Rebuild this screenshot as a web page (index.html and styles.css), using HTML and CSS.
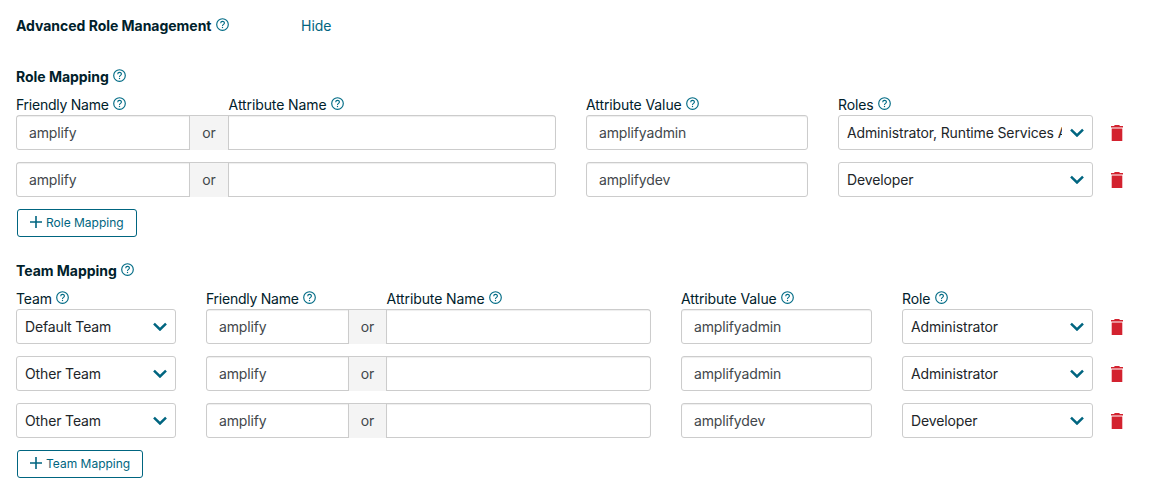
FILE: index.html
```html
<!DOCTYPE html>
<html lang="en">
<head>
<meta charset="utf-8">
<title>Advanced Role Management</title>
<link rel="stylesheet" href="styles.css">
</head>
<body>
<svg class="sprite" aria-hidden="true">
  <symbol id="help" viewBox="0 0 13 13"><circle cx="6.5" cy="6.5" r="5.8" fill="none" stroke="currentColor" stroke-width="1.15"/><path d="M4.7 5.2C4.7 2.7 8.4 2.8 8.4 5C8.4 6.4 6.5 6.4 6.5 7.9" fill="none" stroke="currentColor" stroke-width="1.1"/><path d="M5.9 8.9h1.2v1.2H5.9z" fill="currentColor"/></symbol>
  <symbol id="chevron" viewBox="0 0 14 9"><path d="M1 1.7L7 7.5L13 1.7" fill="none" stroke="currentColor" stroke-width="2.5"/></symbol>
  <symbol id="trash" viewBox="0 0 12 16"><path d="M0 .9H3L3.8 .1H8.2L9 .9H12V2.6H0zM.7 3.6H11.3V16H.7z" fill="currentColor"/></symbol>
  <symbol id="plus" viewBox="0 0 12 12"><path d="M6 0V12M0 6H12" fill="none" stroke="currentColor" stroke-width="1.6"/></symbol>
</svg>
<main class="panel">
  <header class="panel-header">
    <h1 class="title">Advanced Role Management<svg class="help"><use href="#help"/></svg></h1>
    <a class="toggle">Hide</a>
  </header>

  <section class="section role-section">
    <h2 class="title">Role Mapping<svg class="help"><use href="#help"/></svg></h2>
    <div class="row labels">
      <div class="pair"><span class="first">Friendly Name<svg class="help"><use href="#help"/></svg></span><span class="second">Attribute Name<svg class="help"><use href="#help"/></svg></span></div>
      <span>Attribute Value<svg class="help"><use href="#help"/></svg></span>
      <span>Roles<svg class="help"><use href="#help"/></svg></span>
    </div>
    <div class="rows">
      <div class="row">
        <div class="pair field"><span class="input">amplify</span><span class="or">or</span><span class="input"></span></div>
        <div class="field input">amplifyadmin</div>
        <div class="field select"><span class="value">Administrator, Runtime Services Admin</span><svg class="chevron"><use href="#chevron"/></svg></div>
        <svg class="trash"><use href="#trash"/></svg>
      </div>
      <div class="row">
        <div class="pair field"><span class="input">amplify</span><span class="or">or</span><span class="input"></span></div>
        <div class="field input">amplifydev</div>
        <div class="field select"><span class="value">Developer</span><svg class="chevron"><use href="#chevron"/></svg></div>
        <svg class="trash"><use href="#trash"/></svg>
      </div>
    </div>
    <button class="add"><svg class="plus"><use href="#plus"/></svg>Role Mapping</button>
  </section>

  <section class="section team-section">
    <h2 class="title">Team Mapping<svg class="help"><use href="#help"/></svg></h2>
    <div class="row labels">
      <span>Team<svg class="help"><use href="#help"/></svg></span>
      <div class="pair"><span class="first">Friendly Name<svg class="help"><use href="#help"/></svg></span><span class="second">Attribute Name<svg class="help"><use href="#help"/></svg></span></div>
      <span>Attribute Value<svg class="help"><use href="#help"/></svg></span>
      <span>Role<svg class="help"><use href="#help"/></svg></span>
    </div>
    <div class="rows">
      <div class="row">
        <div class="field select"><span class="value">Default Team</span><svg class="chevron"><use href="#chevron"/></svg></div>
        <div class="pair field"><span class="input">amplify</span><span class="or">or</span><span class="input"></span></div>
        <div class="field input">amplifyadmin</div>
        <div class="field select"><span class="value">Administrator</span><svg class="chevron"><use href="#chevron"/></svg></div>
        <svg class="trash"><use href="#trash"/></svg>
      </div>
      <div class="row">
        <div class="field select"><span class="value">Other Team</span><svg class="chevron"><use href="#chevron"/></svg></div>
        <div class="pair field"><span class="input">amplify</span><span class="or">or</span><span class="input"></span></div>
        <div class="field input">amplifyadmin</div>
        <div class="field select"><span class="value">Administrator</span><svg class="chevron"><use href="#chevron"/></svg></div>
        <svg class="trash"><use href="#trash"/></svg>
      </div>
      <div class="row">
        <div class="field select"><span class="value">Other Team</span><svg class="chevron"><use href="#chevron"/></svg></div>
        <div class="pair field"><span class="input">amplify</span><span class="or">or</span><span class="input"></span></div>
        <div class="field input">amplifydev</div>
        <div class="field select"><span class="value">Developer</span><svg class="chevron"><use href="#chevron"/></svg></div>
        <svg class="trash"><use href="#trash"/></svg>
      </div>
    </div>
    <button class="add"><svg class="plus"><use href="#plus"/></svg>Team Mapping</button>
  </section>
</main>
</body>
</html>
```
FILE: styles.css
```css
* { box-sizing: border-box; }
body {
  margin: 0;
  background: #fff;
  color: #00212b;
  font: 14px/20px Inter, "Liberation Sans", sans-serif;
  letter-spacing: -.1px;
}
.sprite { display: none; }
.panel { padding: 16px 16px 0; }
.panel-header { display: grid; grid-template-columns: 285px auto; }
.title { margin: 0; font-size: 14px; font-weight: 700; line-height: 20px; letter-spacing: -.03px; white-space: nowrap; }
.toggle { color: #006580; letter-spacing: 0; }
.help {
  width: 13px;
  height: 13px;
  margin-left: 4.2px;
  vertical-align: 0;
  color: #006b85;
}
.section { margin-top: 24px; }
.role-section { margin-top: 31px; }
.labels { height: 20px; margin-top: 8px; white-space: nowrap; }
.title { height: 20px; }
.rows { display: grid; gap: 12px; }
.row { display: grid; column-gap: 30px; }
.role-section .row { grid-template-columns: 540px 222px 255px 12px; }
.team-section .row { grid-template-columns: 160px 445px 191px 191px 12px; }
.pair { display: grid; }
.role-section .pair { grid-template-columns: 172px 40px 1fr; }
.team-section .pair { grid-template-columns: 141px 39px 1fr; }
.labels .first { margin-left: -.6px; letter-spacing: -.25px; }
.labels .second { grid-column: 3; }
.labels .pair { padding-left: .6px; }
.field {
  height: 35px;
  border: 1px solid #ccc;
  border-radius: 3px;
  background: #fff;
}
.input { padding: 0 12px; line-height: 34px; color: #42474b; letter-spacing: -.14px; }
.field.input, .pair .input { box-shadow: inset 0 1px 1px rgba(0, 0, 0, .07); }
.or {
  border: solid #ccc;
  border-width: 0 1px;
  background: #f4f4f4;
  color: #42474b;
  line-height: 34px;
  text-align: center;
}
.select { display: flex; align-items: center; padding: 0 8px; color: #212529; letter-spacing: -.14px; }
.value {
  flex: 1;
  margin-right: 8px;
  overflow: hidden;
  line-height: 33px;
  white-space: nowrap;
}
.chevron { width: 14px; height: 9px; color: #006580; }
.trash { align-self: center; width: 12px; height: 16px; margin-left: -12px; color: #d3222f; }
.add {
  display: flex;
  align-items: center;
  height: 28px;
  margin: 12px 0 0 1px;
  padding: 0 12px;
  border: 1px solid #006580;
  border-radius: 3px;
  background: #fff;
  color: #006580;
  font: 12px/26px Inter, "Liberation Sans", sans-serif;
  letter-spacing: 0;
}
.plus { width: 12px; height: 12px; margin: -3px 4px 0 0; }
```
